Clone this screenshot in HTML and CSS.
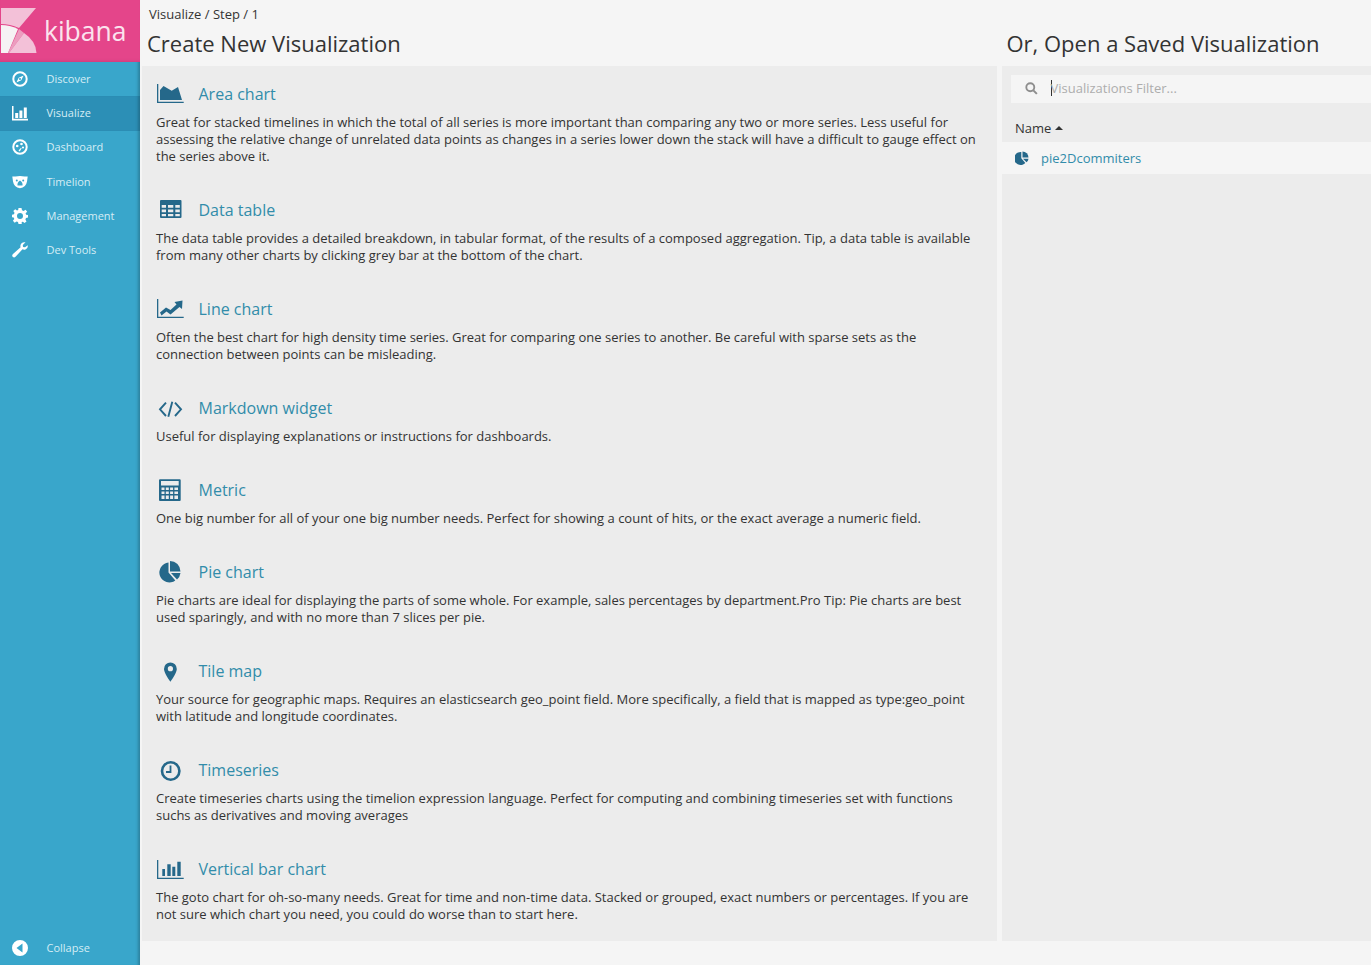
FILE: index.html
```html
<!DOCTYPE html>
<html lang="en">
<head>
<meta charset="utf-8">
<title>Visualize - Kibana</title>
<link rel="stylesheet" href="styles.css">
</head>
<body>
<div class="app">
  <aside class="nav">
    <div class="logo">
      <svg class="logo-mark" viewBox="0 0 36 46" width="36" height="46">
        <path d="M0 0H35L18 20Q9 16 0 16Z" fill="#f3c1d8"/>
        <path d="M0 17Q9 17 17 21L7 45H0Z" fill="#f6f2f4"/>
        <path d="M18 21L23 25L8 45H7Z" fill="#ec9dbf"/>
        <path d="M23 25Q35 33 35.500 45H8Z" fill="#f3c1d8"/>
      </svg>
      <span class="logo-text">kibana</span>
    </div>
    <a class="nav-item">
      <svg class="nav-icon" viewBox="0 0 16 16"><circle cx="8" cy="8" r="6.700" fill="none" stroke="#fff" stroke-width="2"/><path d="M11.600 4.400L9.300 9.300L4.400 11.600L6.700 6.700ZM8 7a1 1 0 100 2 1 1 0 000-2Z" fill="#fff" fill-rule="evenodd"/></svg>
      <span>Discover</span>
    </a>
    <a class="nav-item active">
      <svg class="nav-icon" viewBox="0 0 16 16"><path d="M0 1H1.500V13.800H16V15.500H0Z" fill="#fff"/><path d="M3.200 8H6.200V13H3.200ZM7.400 5.500H10.400V13H7.400ZM11.800 2.500H14.800V13H11.800Z" fill="#fff"/></svg>
      <span>Visualize</span>
    </a>
    <a class="nav-item">
      <svg class="nav-icon" viewBox="0 0 16 16"><circle cx="8" cy="8" r="6.700" fill="none" stroke="#fff" stroke-width="2"/><circle cx="5.200" cy="7" r="1.300" fill="#fff"/><circle cx="9.500" cy="5" r="1.300" fill="#fff"/><circle cx="11" cy="8.500" r="1.100" fill="#fff"/><path d="M6.500 11.500L9 8.700L9.600 9.300L7.800 12.500Z" fill="#fff"/></svg>
      <span>Dashboard</span>
    </a>
    <a class="nav-item">
      <svg class="nav-icon" viewBox="0 0 16 16"><path fill-rule="evenodd" fill="#fff" d="M.3 2.500H3.500Q8 1.500 12.500 2.500H15.700L15 7.500Q14 13.500 8 14.200 2 13.500 1 7.500ZM4.800 5.500a1 1 0 100 2 1 1 0 000-2ZM11.200 5.500a1 1 0 100 2 1 1 0 000-2ZM8 6.500Q5 8.500 5.500 11.500H10.500Q11 8.500 8 6.500Z"/></svg>
      <span>Timelion</span>
    </a>
    <a class="nav-item">
      <svg class="nav-icon" viewBox="0 0 16 16"><path fill-rule="evenodd" fill="#fff" d="M6.500 0H9.500L10 2.200L11.600 2.900L13.600 1.700L15.200 3.800L13.600 5.300L14.100 6.800L16 7V9.500L14 10L13.400 11.500L14.500 13.400L12.500 15L10.900 13.700L9.700 14V16H6.500L6 14L4.500 13.400L2.700 14.700L.9 12.800L2.300 11L1.700 9.600L0 9.300V6.700L2 6.200L2.500 4.800L1.300 3L3.200 1.200L5 2.500L6.200 2ZM8 5a3 3 0 100 6 3 3 0 000-6Z"/></svg>
      <span>Management</span>
    </a>
    <a class="nav-item">
      <svg class="nav-icon" viewBox="0 0 16 16"><path fill="#fff" d="M15.800 3.200Q16.200 6.500 13.500 7.500 11.800 8 10.500 7.300L3.500 14.800Q2 16 .7 14.800 -.4 13.300 1 12L8.600 5.300Q7.900 3.300 9.300 1.600 11 -.2 13.500.3L10.800 3L11 5L13 5.300Z"/></svg>
      <span>Dev Tools</span>
    </a>
    <a class="nav-item collapse">
      <svg class="nav-icon" viewBox="0 0 16 16"><path fill-rule="evenodd" fill="#fff" d="M8 0a8 8 0 100 16A8 8 0 008 0ZM10.500 3.500V12.500L4.500 8Z"/></svg>
      <span>Collapse</span>
    </a>
  </aside>
  <main class="content">
    <div class="crumbs">Visualize / Step / 1</div>
    <div class="columns">
      <section class="col-left">
        <h1 class="heading">Create New Visualization</h1>
        <div class="panel types">
          <article class="type">
            <h2 class="type-title"><svg class="type-icon" viewBox="0 0 28 22"><path d="M1 1H2.300V18.700H27.700V20H1Z" fill="#25688a"/><path d="M4 17V7L7.500 3L15.700 7.700L22 4L26 17Z" fill="#25688a"/></svg><span>Area chart</span></h2>
            <p class="type-desc">Great for stacked timelines in which the total of all series is more important than comparing any two or more series. Less useful for assessing the relative change of unrelated data points as changes in a series lower down the stack will have a difficult to gauge effect on the series above it.</p>
          </article>
          <article class="type">
            <h2 class="type-title"><svg class="type-icon" viewBox="0 0 28 22"><path fill-rule="evenodd" fill="#25688a" d="M5 1H24.500Q25.500 1 25.500 2V18Q25.500 19 24.500 19H5Q4 19 4 18V2Q4 1 5 1ZM5.700 6V8.700H10V6ZM12 6V8.700H17.300V6ZM19.300 6V8.700H23.800V6ZM5.700 10.500V13.200H10V10.500ZM12 10.500V13.200H17.300V10.500ZM19.300 10.500V13.200H23.800V10.500ZM5.700 15V17.300H10V15ZM12 15V17.300H17.300V15ZM19.300 15V17.300H23.800V15Z"/></svg><span>Data table</span></h2>
            <p class="type-desc">The data table provides a detailed breakdown, in tabular format, of the results of a composed aggregation. Tip, a data table is available from many other charts by clicking grey bar at the bottom of the chart.</p>
          </article>
          <article class="type">
            <h2 class="type-title"><svg class="type-icon" viewBox="0 0 28 22"><path d="M1 1H2.300V18.700H27.700V20H1Z" fill="#25688a"/><path d="M4 14.500L10 9.500L14.500 12L20.500 6.500L18.500 4L26.500 2.500L26 11L23.500 9L14.500 16.500L10.500 13.500L5.500 17.500Z" fill="#25688a"/></svg><span>Line chart</span></h2>
            <p class="type-desc">Often the best chart for high density time series. Great for comparing one series to another. Be careful with sparse sets as the connection between points can be misleading.</p>
          </article>
          <article class="type">
            <h2 class="type-title"><svg class="type-icon" viewBox="0 0 28 22"><path d="M10 5.700L4 12.300L10 19M19 5.700L25 12.300L19 19M16.300 4.700L12.300 19.700" fill="none" stroke="#25688a" stroke-width="1.900"/></svg><span>Markdown widget</span></h2>
            <p class="type-desc">Useful for displaying explanations or instructions for dashboards.</p>
          </article>
          <article class="type">
            <h2 class="type-title"><svg class="type-icon" viewBox="0 0 28 22"><path fill-rule="evenodd" fill="#25688a" d="M4 .3H23.700Q24.700.3 24.700 1.300V21Q24.700 22 23.700 22H4Q3 22 3 21V1.300Q3 .3 4 .3ZM5 2V6.500H22.700V2ZM5.500 8.500V11H8.500V8.500ZM9.800 8.500V11H12.800V8.500ZM14.100 8.500V11H17.100V8.500ZM18.400 8.500V11H22V8.500ZM5.500 12.500V15H8.500V12.500ZM9.800 12.500V15H12.800V12.500ZM14.100 12.500V15H17.100V12.500ZM18.400 12.500V15H22V12.500ZM5.500 16.500V20H8.500V16.500ZM9.800 16.500V20H12.800V16.500ZM14.100 16.500V20H17.100V16.500ZM18.400 16.500V20H22V16.500Z"/></svg><span>Metric</span></h2>
            <p class="type-desc">One big number for all of your one big number needs. Perfect for showing a count of hits, or the exact average a numeric field.</p>
          </article>
          <article class="type">
            <h2 class="type-title"><svg class="type-icon" viewBox="0 0 28 22"><path d="M12.500 1.500V11.500L19.300 19.500A10 10 0 1 1 12.500 1.500Z" fill="#25688a"/><path d="M14 0A10.500 10.500 0 0 1 24.500 10.500H14Z" fill="#25688a"/><path d="M15 12H24.500Q24 16 21 18.500Z" fill="#25688a"/></svg><span>Pie chart</span></h2>
            <p class="type-desc">Pie charts are ideal for displaying the parts of some whole. For example, sales percentages by department.Pro Tip: Pie charts are best used sparingly, and with no more than 7 slices per pie.</p>
          </article>
          <article class="type">
            <h2 class="type-title"><svg class="type-icon" viewBox="0 0 28 22"><path fill-rule="evenodd" fill="#25688a" d="M14.400 2.500A6.400 6.400 0 0 1 20.800 8.900C20.800 12 17 18 14.400 21.700 11.800 18 8 12 8 8.900A6.400 6.400 0 0 1 14.400 2.500ZM14.400 6.100a2.600 2.600 0 100 5.200 2.600 2.600 0 000-5.200Z"/></svg><span>Tile map</span></h2>
            <p class="type-desc">Your source for geographic maps. Requires an elasticsearch geo_point field. More specifically, a field that is mapped as type:geo_point with latitude and longitude coordinates.</p>
          </article>
          <article class="type">
            <h2 class="type-title"><svg class="type-icon" viewBox="0 0 28 22"><circle cx="14.700" cy="12" r="8.700" fill="none" stroke="#25688a" stroke-width="2.600"/><path d="M14.500 6.500V13H10" fill="none" stroke="#25688a" stroke-width="1.800"/></svg><span>Timeseries</span></h2>
            <p class="type-desc">Create timeseries charts using the timelion expression language. Perfect for computing and combining timeseries set with functions suchs as derivatives and moving averages</p>
          </article>
          <article class="type">
            <h2 class="type-title"><svg class="type-icon" viewBox="0 0 28 22"><path d="M1 2H2.300V19.700H27.700V21H1Z" fill="#25688a"/><path d="M6.300 11H9V18H6.300ZM11.300 6.300H14.700V18H11.300ZM16.300 8.700H19.300V18H16.300ZM21.300 3.700H24.700V18H21.300Z" fill="#25688a"/></svg><span>Vertical bar chart</span></h2>
            <p class="type-desc">The goto chart for oh-so-many needs. Great for time and non-time data. Stacked or grouped, exact numbers or percentages. If you are not sure which chart you need, you could do worse than to start here.</p>
          </article>
        </div>
      </section>
      <section class="col-right">
        <h1 class="heading heading-right">Or, Open a Saved Visualization</h1>
        <div class="panel saved">
          <div class="search">
            <svg class="search-icon" viewBox="0 0 14 14"><circle cx="5.700" cy="5.700" r="4.300" fill="none" stroke="#8e8e8e" stroke-width="2"/><path d="M9 9L12.800 12.800" stroke="#8e8e8e" stroke-width="2.200"/></svg>
            <span class="caret"></span>
            <span class="placeholder">Visualizations Filter...</span>
          </div>
          <div class="sort">Name <span class="sort-arrow"></span></div>
          <div class="saved-row">
            <svg class="saved-icon" viewBox="0 0 14 14"><path d="M6.300 1V7.200L10.300 12A6.500 6.500 0 1 1 6.300 1Z" fill="#25688a"/><path d="M7.500 0.500A6 6 0 0 1 13.500 6.500H7.500Z" fill="#25688a"/><path d="M8 7.700H13.500Q13.300 9.700 11.500 11.300Z" fill="#25688a"/></svg>
            <a class="saved-link">pie2Dcommiters</a>
          </div>
        </div>
      </section>
    </div>
  </main>
</div>
</body>
</html>
```

FILE: styles.css
```css
* { box-sizing: border-box; }
html, body { margin: 0; height: 100%; }
body {
  font-family: "Open Sans", "Noto Sans", sans-serif;
  background: #f5f5f5;
  color: #333;
  overflow: hidden;
}
.app { display: flex; height: 965px; }
.nav {
  width: 140px;
  flex: none;
  display: flex;
  flex-direction: column;
  background: #39a6cb;
  box-shadow: inset -4px 0 3px -2px rgba(0, 0, 0, .22);
}
.logo {
  height: 62px;
  background: #e4458a;
  display: flex;
  align-items: center;
  padding-left: 1px;
  flex: none;
  box-shadow: inset 0 -3px 3px -2px rgba(0, 0, 0, .1);
}
.logo-mark { display: block; flex: none; }
.logo-text {
  font-size: 26.500px;
  line-height: 46px;
  color: #fbe3ee;
  margin-left: 7px;
}
.nav-item {
  height: 34.300px;
  display: flex;
  align-items: center;
  padding: 0 0 2px 12px;
  font-size: 11px;
  color: #d5edf5;
  flex: none;
}
.nav-item.active { background: #2c8fb6; box-shadow: inset -4px 0 3px -2px rgba(0, 0, 0, .22); }
.nav-icon { width: 16px; height: 16px; margin: 1px 18.500px 0 0; flex: none; }
.collapse { margin-top: auto; height: 34px; }
.content {
  flex: 1;
  min-width: 0;
  padding-left: 2px;
  padding-bottom: 24px;
  display: flex;
  flex-direction: column;
}
.crumbs {
  font-size: 13px;
  line-height: 17px;
  padding: 6px 0 0 7px;
  height: 23px;
  flex: none;
}
.columns {
  flex: 1;
  display: grid;
  grid-template-columns: 855px 369px;
  grid-template-rows: minmax(0, 1fr);
  column-gap: 5px;
  min-height: 0;
}
.col-left, .col-right { display: flex; flex-direction: column; min-height: 0; }
.heading {
  margin: 0;
  font-weight: 400;
  font-size: 22px;
  line-height: 30px;
  height: 43px;
  padding: 5px 0 0 5px;
  flex: none;
  white-space: nowrap;
}
.heading-right { padding-left: 4.500px; }
.panel { flex: 1; background: #ececec; }
.types { padding: 14px 14px 0; }
.type { margin-bottom: 31px; }
.type:last-child { margin-bottom: 0; }
.type-title {
  margin: 0 0 6px;
  height: 28px;
  display: flex;
  align-items: center;
  font-weight: 400;
  font-size: 16px;
  color: #328caa;
}
.type-icon { width: 28px; height: 22px; margin-right: 14.500px; flex: none; }
.type-desc {
  margin: 0;
  font-size: 13px;
  line-height: 17px;
  color: #333;
}
.saved { padding-top: 9px; }
.search {
  margin-left: 9px;
  height: 28px;
  background: #f5f5f5;
  display: flex;
  align-items: center;
  padding: 0 0 2px 14px;
  font-size: 13px;
}
.search-icon { width: 13px; height: 13px; margin-right: 13px; flex: none; margin-left: -0.5px; }
.caret { width: 1px; height: 16px; background: #333; flex: none; }
.placeholder { color: #adadad; margin-left: -1px; }
.sort {
  font-size: 13px;
  line-height: 18px;
  padding: 16px 0 5px 13px;
  height: 39px;
  display: flex;
  align-items: center;
  gap: 3.500px;
}
.sort-arrow {
  width: 0;
  height: 0;
  border-left: 4px solid transparent;
  border-right: 4px solid transparent;
  border-bottom: 4px solid #333;
}
.saved-row {
  height: 32px;
  background: #f5f5f5;
  display: flex;
  align-items: center;
  padding-left: 13px;
  font-size: 13px;
}
.saved-icon { width: 14px; height: 14px; margin-right: 12px; flex: none; }
.saved-link { color: #328caa; }
```
